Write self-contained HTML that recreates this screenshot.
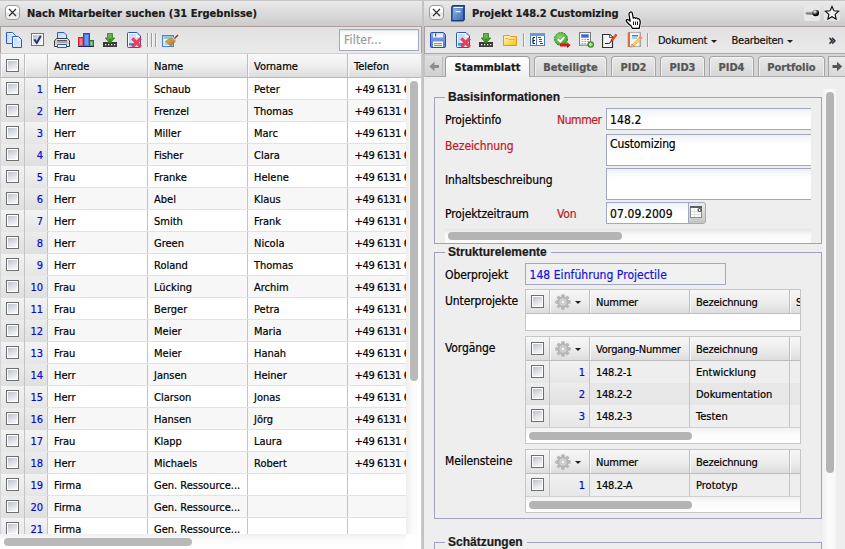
<!DOCTYPE html>
<html lang="de"><head><meta charset="utf-8"><title>Projectile</title>
<style>
html,body{margin:0;padding:0}
body{-webkit-text-stroke:0.2px;width:845px;height:549px;overflow:hidden;background:#eee;position:relative;font-family:"DejaVu Sans Condensed","Liberation Sans",sans-serif;font-size:11px;color:#000}
i,em,b{font-style:normal;font-weight:normal}
span,i,em,b,div{box-sizing:border-box}
#L{position:absolute;left:0;top:0;width:422px;height:549px;overflow:hidden;background:#fff}
#L:after{content:'';position:absolute;left:421px;top:54px;width:1px;height:495px;background:#cdcdcd}
#R{position:absolute;left:424px;top:0;width:421px;height:549px;overflow:hidden;background:#eee}
#split{position:absolute;left:422px;top:0;width:2px;height:549px;background:linear-gradient(90deg,#c9c9c9,#bebebe)}
.tbar{position:absolute;left:0;top:0;width:100%;height:26px;border-top:1px solid #c5c5c5;background:linear-gradient(#eaeaea,#d9d9d9 55%,#cbcbcb)}
.xbtn{position:absolute;top:4px;width:15px;height:15px;border:1px solid #9a9a9a;border-radius:4px;background:linear-gradient(#fff,#fff 45%,#e6e6e6 55%,#f4f4f4)}
.xbtn svg{position:absolute;left:0;top:0}
.ttl{position:absolute;top:5px;letter-spacing:0.04px;font-weight:bold;font-size:11px;line-height:15px;white-space:nowrap;color:#1a1a1a}
.tool{position:absolute;left:0;top:26px;width:100%;height:28px;background:linear-gradient(#e1e1e1,#eaeaea);border:1px solid #ad9e9e;border-bottom-color:#c2c2c2}
.ic{position:absolute;width:16px;height:16px;display:block}
.ic svg{display:block}
.sep3{position:absolute;top:6px;width:2px;height:14px;border-left:1px solid #a39d8c;background:#f6f6f6}
.sep1{position:absolute;top:6px;width:2px;height:14px;border-left:1px solid #a39d8c;background:#f6f6f6}
.filter{position:absolute;left:338px;top:2px;width:80px;letter-spacing:0.2px;height:22px;border:1px solid #a3a7c4;background:linear-gradient(#f2f4f5,#fff 40%);color:#9a9a9a;font-size:12px;line-height:20px;padding-left:4px;box-shadow:inset 0 1px 1px #dfe3e8}
/* grid head */
.ghead{position:absolute;left:0;top:53px;width:422px;height:25px;border-top:1px solid #d0d0d0;border-bottom:1px solid #b8b8b8;background:linear-gradient(#f9f9f9,#ededed 55%,#dddddd)}
.hc{position:absolute;top:0;height:100%;border-left:1px solid #bdbdbd;box-shadow:inset 1px 0 0 #fafafa;white-space:nowrap;overflow:hidden}
.hc b{position:absolute;left:6px;top:6px;line-height:14px;font-size:11px}
.cb{position:absolute;width:13px;height:13px;border:1px solid #6e6e6e;box-shadow:inset 0 0 0 1px #fff;background:linear-gradient(155deg,#b6bbc4,#dde0e5 50%,#fff)}
#lbody{position:absolute;left:0;top:78px;width:406px;height:456px;overflow:hidden;background:#fff}
.r{position:relative;height:22px;border-bottom:1px solid #e2e2e2;white-space:nowrap;background:#fff}
.r.alt{background:#f7f7f7}
.r span{position:absolute;top:0;height:21px;line-height:21px;padding-top:1px;overflow:hidden}
.r .c0{left:0;width:24px;height:22px;background:linear-gradient(#f3f3f3,#e5e5e5);border-left:1px solid #d4d4d4}
.r .c1{left:24px;width:23px;height:22px;background:linear-gradient(#f3f3f3,#e5e5e5);border-left:1px solid #c4c4c4;color:#0808d4;text-align:right;padding-right:4px}
.r.alt .c0,.r.alt .c1{background:linear-gradient(#ececec,#dfdfdf)}
.r .c2{left:47px;width:100px;border-left:1px solid #c4c4c4;padding-left:6px}
.r .c3{left:147px;width:100px;border-left:1px solid #c4c4c4;padding-left:6px}
.r .c4{left:247px;width:100px;border-left:1px solid #c4c4c4;padding-left:6px}
.r .c5{left:347px;width:75px;border-left:1px solid #c4c4c4;padding-left:6.5px;letter-spacing:-0.35px}
.r .cb{left:5px;top:4px}
.vsb{position:absolute}
#lvsb{left:406px;top:78px;width:15px;height:456px;background:linear-gradient(90deg,#ededed,#fbfbfb 40%,#fff)}
#lvsb i{position:absolute;left:4px;top:3px;width:8px;height:300px;border-radius:4px;background:#b9b9b9}
#lhsb{position:absolute;left:0;top:534px;width:406px;height:15px;background:linear-gradient(#f0f0f0,#fbfbfb 40%,#fff)}
.tool#rtool{border-bottom-color:#b3a4a4;width:430px}
#lhsb i{position:absolute;left:4px;top:4px;width:188px;height:8px;border-radius:4px;background:#b9b9b9}
/* right */
.pin{position:absolute;left:380px;top:4px;width:16px;height:16px;border-radius:2px;background:#e7e7e7}
.star{position:absolute;left:400px;top:4px;width:16px;height:16px;border-radius:2px;background:#e7e7e7}
.pin svg,.star svg{display:block}
.mnu{position:absolute;top:7px;font-size:11px;line-height:14px;white-space:nowrap;color:#111;letter-spacing:-0.25px}
.dn{position:absolute;width:0;height:0;border:3px solid transparent;border-top:3px solid #222;border-bottom:0}
.mnu .dn{left:100%;top:6px;margin-left:3.5px}
.more{position:absolute;left:403.500px;top:4.500px;font-size:14px;-webkit-text-stroke:0.5px;line-height:16px;color:#1a1a1a}
#tabs{position:absolute;left:0;top:54px;width:421px;height:23px;background:#d6d6d6;border-left:1px solid #c4c4c4}
#tabs:after{content:'';position:absolute;left:0;top:22px;width:100%;height:1px;background:#ababab}
.tab{position:absolute;top:2px;height:20px;border:1px solid #a4a4a4;border-bottom:0;border-radius:4px 4px 0 0;background:linear-gradient(#e9e9e9,#d6d6d6);color:#555;font-weight:bold;font-size:11px;text-align:center;line-height:21px;box-shadow:inset 0 1px 0 #f6f6f6,inset 1px 0 0 #f0f0f0,inset -1px 0 0 #f0f0f0}
.tab.act{background:linear-gradient(#fff,#f8f8f8 50%,#f0f0f0);color:#1a1a1a;height:21px;border-color:#9c9c9c;z-index:2;box-shadow:none}
.sarrow{position:absolute;top:2px;width:18px;height:20px;background:linear-gradient(#dedede,#d0d0d0);border:1px solid #e2e2e2;border-right-color:#bcbcbc;border-left:0;border-bottom:0}
.sarrow.r{border-left:1px solid #a4a4a4;border-top-color:#a4a4a4;border-right:0;width:18px;background:linear-gradient(#ececec,#d8d8d8)}
.sarrow svg{display:block}
#cont{position:absolute;left:-424px;top:78px;width:845px;height:471px;overflow:hidden}
#cont>*{margin-top:-78px}
.fs{position:absolute;left:434px;width:388px;border:1px solid #9fa1bd}
.lg{position:absolute;left:10px;top:-9px;padding:0 4px 0 3px;background:#eee;font-family:"Liberation Sans",sans-serif;font-weight:bold;font-size:12px;line-height:16px;color:#1a1a1a;white-space:nowrap}
.lb{position:absolute;left:445px;font-size:12px;line-height:14px;white-space:nowrap;letter-spacing:-0.1px}
.red{color:#c0181c}
.inp{position:absolute;border:1px solid #a3a7c4;background:linear-gradient(#eef1f3,#fff 9px);overflow:hidden}
.inp em{position:absolute;left:3px;top:4px;font-size:12px;line-height:14px;white-space:nowrap;letter-spacing:0.1px}
.calb{position:absolute;left:688px;top:202px;width:18px;height:22px;border:1px solid #a3a7c4;border-radius:0 3px 3px 0;background:linear-gradient(#ececec,#c4c4c4)}
.calb svg{display:block}
.hs2{position:absolute;height:14px;background:linear-gradient(#e6e6e6,#f8f8f8 40%,#fdfdfd);}
.hs2 i{position:absolute;top:3px;height:8px;border-radius:4px;background:#b4b4b4}
.clip{position:absolute;background:#eee}
.ro{position:absolute;border:1px solid #a3a7c4;background:#f0f0f0;color:#1414d8;font-size:12px;line-height:19px;padding:2px 0 0 3.5px;white-space:nowrap;letter-spacing:0.05px;overflow:hidden}
.sg{position:absolute;left:525px;width:276px;overflow:hidden;border:1px solid #c6c6c6;background:#fff}
.sgh{position:relative;height:24px;border-bottom:1px solid #bcbcbc;background:linear-gradient(#f7f7f7,#ececec 55%,#dddddd)}
.sgh .hc:first-child{border-left:0;box-shadow:none}
.sgh .hc b{top:6px;left:6px;letter-spacing:-0.2px}
.sgh svg{position:absolute;left:5px;top:4px}
.sr{position:relative;height:22px;background:#eeeeee;white-space:nowrap}
.sr.alt{background:#e7e7e7}
.sr span{position:absolute;top:0;height:22px;line-height:22px;padding-top:1px;overflow:hidden;border-left:1px solid #c4c4c4}
.sr .c0{left:0;width:23px;border-left:0;background:linear-gradient(rgba(255,255,255,.25),rgba(0,0,0,.03))}
.sr .c1{left:23px;width:40px;background:linear-gradient(rgba(255,255,255,.25),rgba(0,0,0,.03));color:#0808d4;text-align:right;padding-right:4px}
.sr .c2{left:63px;width:100px;padding-left:6px;letter-spacing:-0.3px}
.sr .c3{left:163px;width:100px;padding-left:6px}
.sr .c4{left:263px;width:20px}
.sr .cb{left:5px;top:4px}
.empty{height:16px;background:#fff}
.hs3{position:relative;height:16px;border-top:1px solid #cfcfcf;background:linear-gradient(#f1f1f1,#fbfbfb 40%,#fff)}
.hs3 i{position:absolute;left:3px;top:4px;width:163px;height:8px;border-radius:4px;background:#b4b4b4}
#rvsb{left:823px;top:89px;width:13px;height:460px;background:linear-gradient(90deg,#f2f2f2,#fbfbfb 50%,#f6f6f6)}
#rvsb i{position:absolute;left:3px;top:3px;width:8px;height:381px;border-radius:4px;background:#b4b4b4}
#cursor{position:absolute;left:200.5px;top:11px;width:20px;height:24px}

</style></head><body>
<div id="L">
<div class="tbar"><span class="xbtn" style="left:5px"><svg width="13" height="13" viewBox="0 0 13 13"><path d="M3 3L10 10M10 3L3 10" stroke="#2e2e2e" stroke-width="1.15" fill="none"/></svg></span><span class="ttl" style="left:27px">Nach Mitarbeiter suchen (31 Ergebnisse)</span></div>
<div class="tool" id="ltool"><span class="ic" style="left:5px;top:5px"><svg width="16" height="16" viewBox="0 0 16 16"><defs><linearGradient id="gpg" x1="0" y1="0" x2="1" y2="1"><stop offset="0" stop-color="#bcd4f8"/><stop offset="1" stop-color="#e6f0ff"/></linearGradient></defs><path d="M0.5 0.5H6.5L9.5 3.5V11.5H0.5Z" fill="url(#gpg)" stroke="#2f58c0"/><path d="M1.5 1.5H6V4H8.5" fill="none" stroke="#fff" stroke-width="1"/><path d="M6.500 4.500H12.500L15.500 7.500V15.500H6.500Z" fill="url(#gpg)" stroke="#2f58c0"/><path d="M7.500 14.500V5.500H12V8H14.500" fill="none" stroke="#fff" stroke-width="1"/></svg></span><span class="ic" style="left:30px;top:6px"><svg width="16" height="16" viewBox="0 0 16 16"><defs><linearGradient id="gck" x1="0" y1="0" x2="1" y2="1"><stop offset="0" stop-color="#b8bcc8"/><stop offset="1" stop-color="#fff"/></linearGradient></defs><rect x="0.5" y="0.500" width="12" height="12" fill="#fff" stroke="#747474"/><rect x="2" y="2" width="9" height="9" fill="url(#gck)"/><path d="M3.300 6.300L5.800 9.800L9.800 2.800" fill="none" stroke="#26367e" stroke-width="2"/></svg></span><span class="ic" style="left:53px;top:5px"><svg width="16" height="16" viewBox="0 0 16 16"><defs><linearGradient id="gpr" x1="0" y1="0" x2="0" y2="1"><stop offset="0" stop-color="#f4f4f4"/><stop offset="0.5" stop-color="#c8c8c8"/><stop offset="1" stop-color="#f0f0f0"/></linearGradient></defs><path d="M3.500 7V0.500H10L12.500 3V7Z" fill="url(#gpg)" stroke="#2a62b8"/><path d="M2.500 6.500H13.500L15.500 9V14.500H0.500V9Z" fill="url(#gpr)" stroke="#3a3a3a"/><rect x="3" y="8" width="10" height="3" fill="#a8a8a8"/><rect x="3" y="8" width="10" height="1" fill="#555"/><path d="M3.500 12.500H12.500V15.500H3.500Z" fill="#e8f0fc" stroke="#2a62b8"/></svg></span><span class="ic" style="left:77px;top:5px"><svg width="16" height="16" viewBox="0 0 16 16"><rect x="0.500" y="5.500" width="5" height="9" fill="#f05058" stroke="#d82030"/><rect x="2" y="7" width="2" height="6" fill="#f88088"/><rect x="5.500" y="1.500" width="6" height="13" fill="#4878e0" stroke="#2048c8"/><rect x="7" y="3" width="3" height="10" fill="#7098e8"/><rect x="11.500" y="8.500" width="4" height="6" fill="#58a858" stroke="#207820"/><rect x="12.700" y="10" width="1.600" height="3" fill="#98d098"/><rect x="0" y="14" width="16" height="1" fill="#28285a"/></svg></span><span class="ic" style="left:101px;top:5px"><svg width="16" height="16" viewBox="0 0 16 16"><defs><linearGradient id="gdn" x1="0" y1="0" x2="1" y2="0"><stop offset="0" stop-color="#3a8a20"/><stop offset="0.5" stop-color="#78b860"/><stop offset="1" stop-color="#2c7a18"/></linearGradient></defs><path d="M5.500 1.500H10.500V6H12.800L8 11.200L3.200 6H5.500Z" fill="url(#gdn)" stroke="#2e8218" stroke-width="0.800"/><rect x="1" y="10" width="14" height="5" fill="#383838"/><path d="M8 6.500V11" stroke="#3a8a20" stroke-width="3"/><g fill="#fff"><rect x="3" y="12" width="1.300" height="1.300"/><rect x="6" y="12" width="1.300" height="1.300"/><rect x="9" y="12" width="1.300" height="1.300"/><rect x="12" y="12" width="1.300" height="1.300"/></g></svg></span><span class="ic" style="left:125px;top:5px"><svg width="16" height="16" viewBox="0 0 16 16"><path d="M1.500 1.500Q1.500 0.500 2.500 0.500H11L14.500 4V14.500Q14.500 15.500 13.500 15.500H2.500Q1.500 15.500 1.500 14.500Z" fill="url(#gpg)" stroke="#2a58b8"/><path d="M2.500 14.500V1.500H10.500V4.500H13.500" fill="none" stroke="#fff"/><rect x="3" y="11" width="6" height="2.500" fill="#3898e8"/><path d="M6.300 6.300L14.800 14.800M14.800 6.300L6.300 14.800" stroke="#f03048" stroke-width="3.200" fill="none" stroke-opacity="0.920"/></svg></span><span class="ic" style="left:161px;top:5px"><svg width="17" height="16" viewBox="0 0 17 16"><defs><linearGradient id="gbr" x1="0" y1="0" x2="1" y2="1"><stop offset="0" stop-color="#e0b860"/><stop offset="1" stop-color="#a87020"/></linearGradient></defs><rect x="0.500" y="3.500" width="11" height="11" fill="#dce8fa" stroke="#4c80d8"/><rect x="1" y="4" width="10" height="1.200" fill="#9cc0f0"/><rect x="2" y="5.500" width="8" height="1" fill="#50b850"/><rect x="2" y="7.500" width="8" height="6" fill="#fff"/><rect x="2.500" y="9" width="7" height="4" fill="#b4ccf4"/><path d="M16 3L11.500 7.500" stroke="#8a3c14" stroke-width="1.400"/><path d="M10 5.500L13.500 9L9 14.500L3.500 9Z" fill="url(#gbr)" stroke="#9a6a20" stroke-width="0.500"/><path d="M10.300 5.300L13.800 8.800" stroke="#c8c8d8" stroke-width="1.300"/></svg></span><i class="sep3" style="left:146px"></i><i class="sep3" style="left:150px"></i><i class="sep3" style="left:154px"></i><span class="filter">Filter...</span></div>
<div class="ghead" id="lhead"><span class="hc" style="left:0;width:24px"><i class="cb" style="left:5px;top:5px"></i></span><span class="hc" style="left:24px;width:23px"></span><span class="hc" style="left:47px;width:100px"><b>Anrede</b></span><span class="hc" style="left:147px;width:100px"><b>Name</b></span><span class="hc" style="left:247px;width:100px"><b>Vorname</b></span><span class="hc" style="left:347px;width:75px"><b>Telefon</b></span></div>
<div id="lbody">
<div class="r"><span class="c0"><i class="cb"></i></span><span class="c1">1</span><span class="c2">Herr</span><span class="c3">Schaub</span><span class="c4">Peter</span><span class="c5">+49 6131 6</span></div>
<div class="r alt"><span class="c0"><i class="cb"></i></span><span class="c1">2</span><span class="c2">Herr</span><span class="c3">Frenzel</span><span class="c4">Thomas</span><span class="c5">+49 6131 6</span></div>
<div class="r"><span class="c0"><i class="cb"></i></span><span class="c1">3</span><span class="c2">Herr</span><span class="c3">Miller</span><span class="c4">Marc</span><span class="c5">+49 6131 6</span></div>
<div class="r alt"><span class="c0"><i class="cb"></i></span><span class="c1">4</span><span class="c2">Frau</span><span class="c3">Fisher</span><span class="c4">Clara</span><span class="c5">+49 6131 6</span></div>
<div class="r"><span class="c0"><i class="cb"></i></span><span class="c1">5</span><span class="c2">Frau</span><span class="c3">Franke</span><span class="c4">Helene</span><span class="c5">+49 6131 6</span></div>
<div class="r alt"><span class="c0"><i class="cb"></i></span><span class="c1">6</span><span class="c2">Herr</span><span class="c3">Abel</span><span class="c4">Klaus</span><span class="c5">+49 6131 6</span></div>
<div class="r"><span class="c0"><i class="cb"></i></span><span class="c1">7</span><span class="c2">Herr</span><span class="c3">Smith</span><span class="c4">Frank</span><span class="c5">+49 6131 6</span></div>
<div class="r alt"><span class="c0"><i class="cb"></i></span><span class="c1">8</span><span class="c2">Herr</span><span class="c3">Green</span><span class="c4">Nicola</span><span class="c5">+49 6131 6</span></div>
<div class="r"><span class="c0"><i class="cb"></i></span><span class="c1">9</span><span class="c2">Herr</span><span class="c3">Roland</span><span class="c4">Thomas</span><span class="c5">+49 6131 6</span></div>
<div class="r alt"><span class="c0"><i class="cb"></i></span><span class="c1">10</span><span class="c2">Frau</span><span class="c3">Lücking</span><span class="c4">Archim</span><span class="c5">+49 6131 6</span></div>
<div class="r"><span class="c0"><i class="cb"></i></span><span class="c1">11</span><span class="c2">Frau</span><span class="c3">Berger</span><span class="c4">Petra</span><span class="c5">+49 6131 6</span></div>
<div class="r alt"><span class="c0"><i class="cb"></i></span><span class="c1">12</span><span class="c2">Frau</span><span class="c3">Meier</span><span class="c4">Maria</span><span class="c5">+49 6131 6</span></div>
<div class="r"><span class="c0"><i class="cb"></i></span><span class="c1">13</span><span class="c2">Frau</span><span class="c3">Meier</span><span class="c4">Hanah</span><span class="c5">+49 6131 6</span></div>
<div class="r alt"><span class="c0"><i class="cb"></i></span><span class="c1">14</span><span class="c2">Herr</span><span class="c3">Jansen</span><span class="c4">Heiner</span><span class="c5">+49 6131 6</span></div>
<div class="r"><span class="c0"><i class="cb"></i></span><span class="c1">15</span><span class="c2">Herr</span><span class="c3">Clarson</span><span class="c4">Jonas</span><span class="c5">+49 6131 6</span></div>
<div class="r alt"><span class="c0"><i class="cb"></i></span><span class="c1">16</span><span class="c2">Herr</span><span class="c3">Hansen</span><span class="c4">Jörg</span><span class="c5">+49 6131 6</span></div>
<div class="r"><span class="c0"><i class="cb"></i></span><span class="c1">17</span><span class="c2">Frau</span><span class="c3">Klapp</span><span class="c4">Laura</span><span class="c5">+49 6131 6</span></div>
<div class="r alt"><span class="c0"><i class="cb"></i></span><span class="c1">18</span><span class="c2">Herr</span><span class="c3">Michaels</span><span class="c4">Robert</span><span class="c5">+49 6131 6</span></div>
<div class="r"><span class="c0"><i class="cb"></i></span><span class="c1">19</span><span class="c2">Firma</span><span class="c3">Gen. Ressource...</span><span class="c4"></span><span class="c5"></span></div>
<div class="r alt"><span class="c0"><i class="cb"></i></span><span class="c1">20</span><span class="c2">Firma</span><span class="c3">Gen. Ressource...</span><span class="c4"></span><span class="c5"></span></div>
<div class="r"><span class="c0"><i class="cb"></i></span><span class="c1">21</span><span class="c2">Firma</span><span class="c3">Gen. Ressource...</span><span class="c4"></span><span class="c5"></span></div>
</div>
<div class="vsb" id="lvsb"><i></i></div><div class="hsb" id="lhsb"><i></i></div>
</div>
<div id="split"></div>
<div id="R">
<div class="tbar"><span class="xbtn" style="left:5px"><svg width="13" height="13" viewBox="0 0 13 13"><path d="M3 3L10 10M10 3L3 10" stroke="#2e2e2e" stroke-width="1.15" fill="none"/></svg></span><span class="ic" style="left:27px;top:4px"><svg width="16" height="17" viewBox="0 0 16 17"><defs><linearGradient id="gbk" x1="0" y1="0" x2="1" y2="1"><stop offset="0" stop-color="#8ab4e4"/><stop offset="1" stop-color="#3c6cb4"/></linearGradient></defs><path d="M2 0.800H13.200V14.500L12 15.800H0.800V2Z" fill="#5888c8" stroke="#1c3c7c" stroke-width="1.400"/><rect x="2" y="3.500" width="9.500" height="11.500" fill="url(#gbk)"/><path d="M2.500 2.500H12" stroke="#fff" stroke-width="1"/><rect x="4.500" y="6" width="5" height="1.200" fill="#e8f0fc"/><path d="M12.300 2.500V15" stroke="#1c3c7c" stroke-width="0.800"/></svg></span><span class="ttl" style="left:48px;letter-spacing:-0.03px">Projekt 148.2 Customizing</span><span class="pin"><svg width="16" height="16" viewBox="0 0 16 16"><defs><radialGradient id="gpn" cx="0.380" cy="0.300" r="0.600"><stop offset="0" stop-color="#fff"/><stop offset="0.300" stop-color="#aaa"/><stop offset="0.800" stop-color="#111"/><stop offset="1" stop-color="#000"/></radialGradient><linearGradient id="gnd" x1="0" y1="0" x2="0" y2="1"><stop offset="0" stop-color="#d8d8d8"/><stop offset="1" stop-color="#555"/></linearGradient></defs><path d="M1 8L3 6.300H9V9.500H3Z" fill="url(#gnd)"/><circle cx="11.700" cy="8" r="3.300" fill="url(#gpn)"/></svg></span><span class="star"><svg width="16" height="16" viewBox="0 0 16 16"><path d="M8.00 1.40L9.94 5.73L14.66 6.24L11.14 9.42L12.11 14.06L8.00 11.70L3.89 14.06L4.86 9.42L1.34 6.24L6.06 5.73Z" fill="#f4f4f4" stroke="#111" stroke-width="1.150" stroke-linejoin="miter"/></svg></span></div>
<div class="tool" id="rtool"><span class="ic" style="left:5px;top:5px"><svg width="16" height="16" viewBox="0 0 16 16"><defs><linearGradient id="gsv" x1="0" y1="0" x2="0" y2="1"><stop offset="0" stop-color="#88a8e8"/><stop offset="1" stop-color="#5078d0"/></linearGradient></defs><path d="M1.500 0.500H13.500L15.500 2.500V14.500Q15.500 15.500 14.500 15.500H1.500Q0.500 15.500 0.500 14.500V1.500Q0.500 0.500 1.500 0.500Z" fill="url(#gsv)" stroke="#2850a8"/><rect x="3" y="1" width="10" height="4.500" fill="#f0f4fc"/><rect x="3" y="1" width="10" height="1.500" fill="#d0dcf4"/><rect x="5" y="1.500" width="1.200" height="3" fill="#304890"/><rect x="3" y="9.500" width="10" height="5.500" fill="#fff"/><rect x="4" y="11" width="8" height="1.200" fill="#68b040"/><rect x="4" y="13" width="8" height="1.200" fill="#68b040"/></svg></span><span class="ic" style="left:30px;top:5px"><svg width="16" height="16" viewBox="0 0 16 16"><path d="M1.500 1.500Q1.500 0.500 2.500 0.500H11L14.500 4V14.500Q14.500 15.500 13.500 15.500H2.500Q1.500 15.500 1.500 14.500Z" fill="url(#gpg)" stroke="#2a58b8"/><path d="M2.500 14.500V1.500H10.500V4.500H13.500" fill="none" stroke="#fff"/><rect x="3" y="11" width="6" height="2.500" fill="#3898e8"/><path d="M6.300 6.300L14.800 14.800M14.800 6.300L6.300 14.800" stroke="#f03048" stroke-width="3.200" fill="none" stroke-opacity="0.920"/></svg></span><span class="ic" style="left:53px;top:5px"><svg width="16" height="16" viewBox="0 0 16 16"><defs><linearGradient id="gdn" x1="0" y1="0" x2="1" y2="0"><stop offset="0" stop-color="#3a8a20"/><stop offset="0.5" stop-color="#78b860"/><stop offset="1" stop-color="#2c7a18"/></linearGradient></defs><path d="M5.500 1.500H10.500V6H12.800L8 11.200L3.200 6H5.500Z" fill="url(#gdn)" stroke="#2e8218" stroke-width="0.800"/><rect x="1" y="10" width="14" height="5" fill="#383838"/><path d="M8 6.500V11" stroke="#3a8a20" stroke-width="3"/><g fill="#fff"><rect x="3" y="12" width="1.300" height="1.300"/><rect x="6" y="12" width="1.300" height="1.300"/><rect x="9" y="12" width="1.300" height="1.300"/><rect x="12" y="12" width="1.300" height="1.300"/></g></svg></span><span class="ic" style="left:77px;top:5px"><svg width="16" height="16" viewBox="0 0 16 16"><defs><linearGradient id="gfo" x1="0" y1="0" x2="1" y2="1"><stop offset="0" stop-color="#fff8c8"/><stop offset="1" stop-color="#f0c418"/></linearGradient></defs><path d="M1.500 3.500H7.500L8.500 4.500H14.500V13.500H1.500Z" fill="url(#gfo)" stroke="#e09828"/><path d="M3 6.500H6L7 7.500H13" fill="none" stroke="#e8b040" stroke-width="1"/></svg></span><span class="ic" style="left:105px;top:5px"><svg width="16" height="16" viewBox="0 0 16 16"><rect x="0.500" y="1.500" width="14" height="12" fill="#fff" stroke="#4c7cc8"/><rect x="0" y="1" width="15" height="3" fill="#6c98d8"/><rect x="6" y="4" width="1" height="9" fill="#4c7cc8"/><path d="M3 5.500V11.500M3 5.500H5M3 8.500H5M3 11.500H5" stroke="#181818" stroke-width="1.200" fill="none"/><path d="M8 5.500H11M9 7.500H12M9 9.500H12M10 11.500H13" stroke="#2038e8" stroke-width="1.200"/></svg></span><span class="ic" style="left:129px;top:5px"><svg width="17" height="16" viewBox="0 0 17 16"><defs><radialGradient id="ggo" cx="0.400" cy="0.350" r="0.700"><stop offset="0" stop-color="#90d078"/><stop offset="1" stop-color="#38a020"/></radialGradient></defs><circle cx="7" cy="7" r="6.500" fill="url(#ggo)" stroke="#2e9a1c" stroke-dasharray="2.200 0.800"/><path d="M3.800 7.200L6.300 9.600L10.500 4.800" fill="none" stroke="#fff" stroke-width="2"/><path d="M6 11.500H13V10.300L16.500 13L13 15.700V14.500H6Z" fill="#e81018"/><path d="M13 14.500V15.700L16.500 13Z" fill="#700"/></svg></span><span class="ic" style="left:154px;top:5px"><svg width="16" height="16" viewBox="0 0 16 16"><rect x="0.500" y="0.500" width="11" height="13" fill="#f8f8f8" stroke="#7c7c7c"/><rect x="1" y="12" width="10" height="1.500" fill="#c8c8c8"/><rect x="2.500" y="2.500" width="7" height="3" fill="#3c68c8" stroke="#6088d8" stroke-width="0.600"/><g fill="#a8a8a8"><rect x="2.500" y="7" width="1.800" height="1"/><rect x="5.300" y="7" width="1.800" height="1"/><rect x="2.500" y="9" width="1.800" height="1"/><rect x="5.300" y="9" width="1.800" height="1"/><rect x="8.100" y="9" width="1.800" height="1"/><rect x="2.500" y="11" width="1.800" height="1"/><rect x="5.300" y="11" width="1.800" height="1"/></g><rect x="8.100" y="7" width="1.800" height="1" fill="#e83038"/><circle cx="11.700" cy="12.500" r="3.300" fill="#3c8c20"/><path d="M11.700 10.600V14.400M10.500 11.400V13.600M12.900 11.400V13.600" stroke="#e8ffe0" stroke-width="1"/></svg></span><span class="ic" style="left:177px;top:5px"><svg width="16" height="16" viewBox="0 0 16 16"><path d="M0.500 2.500H8L10.500 5V15.500H0.500Z" fill="#f4f4f4" stroke="#303030" stroke-width="1.200"/><path d="M7.500 2.500V5.500H10.500" fill="#fff" stroke="#303030" stroke-width="0.800"/><path d="M3 11.500H6.500Q8.500 11.500 8.500 9.500" fill="none" stroke="#202020" stroke-width="1"/><path d="M14.500 2.500L9.200 9" stroke="#e82818" stroke-width="2.200"/><path d="M14.200 2.800L9.500 8.600" stroke="#f8a020" stroke-width="0.800" stroke-dasharray="1 0.600"/><path d="M9.500 8L8.200 10.300L10.500 9Z" fill="#303030"/></svg></span><span class="ic" style="left:202px;top:5px"><svg width="16" height="16" viewBox="0 0 16 16"><rect x="2.500" y="0.500" width="11" height="14" fill="#f4f4f4" stroke="#b0b0b0"/><rect x="12.500" y="1" width="1.500" height="14" fill="#a0a0a0"/><rect x="0.800" y="0.500" width="2.200" height="14.500" fill="#c84818"/><path d="M0.500 2H3M0.500 4H3M0.500 6H3M0.500 8H3M0.500 10H3M0.500 12H3M0.500 14H3" stroke="#f0c090" stroke-width="0.700"/><rect x="5" y="3" width="6" height="1.500" fill="#4880e0"/><rect x="5" y="5.500" width="5" height="1.200" fill="#88b0f0"/><path d="M13.500 6L6 13.500" stroke="#f0c030" stroke-width="3"/><path d="M13.500 6L6 13.500" stroke="#fff0a0" stroke-width="0.800"/><path d="M14.600 4.800L12.500 7" stroke="#e89090" stroke-width="3"/><path d="M5 12L3.800 15.200L7.200 14.300Z" fill="#e8c8a0" stroke="#a07030" stroke-width="0.500"/></svg></span><i class="sep1" style="left:98px"></i><i class="sep1" style="left:222px"></i><span class="mnu" style="left:233px">Dokument<i class="dn"></i></span><span class="mnu" style="left:306.5px">Bearbeiten<i class="dn"></i></span><span class="more">»</span></div>
<div id="tabs"><span class="sarrow" style="left:0"><svg width="18" height="20" viewBox="0 0 18 20"><path d="M4.300 9.500L9.500 4.800V8H14V11H9.500V14.200Z" fill="#8c8c8c"/></svg></span><span class="tab act" style="left:20px;width:85px">Stammblatt</span><span class="tab" style="left:109px;width:73px">Beteiligte</span><span class="tab" style="left:186px;width:45px">PID2</span><span class="tab" style="left:235px;width:45px">PID3</span><span class="tab" style="left:284px;width:45px">PID4</span><span class="tab" style="left:333px;width:67px">Portfolio</span><span class="sarrow r" style="left:403px"><svg width="17" height="20" viewBox="0 0 17 20"><path d="M13.200 9.500L8 4.800V8H3.500V11H8V14.200Z" fill="#555"/></svg></span></div>
<div id="cont">
<div class="fs" style="top:97px;height:147px"><span class="lg">Basisinformationen</span></div>
<span class="lb" style="top:113px">Projektinfo</span><span class="lb red" style="left:557px;top:113px;letter-spacing:-0.4px">Nummer</span><span class="inp" style="left:606px;top:108px;width:215px;height:22px"><em>148.2</em></span>
<span class="lb red" style="top:139px">Bezeichnung</span><span class="inp" style="left:606px;top:134px;width:215px;height:32px"><em style="top:2px;letter-spacing:-0.1px">Customizing</em></span>
<span class="lb" style="top:173px">Inhaltsbeschreibung</span><span class="inp" style="left:606px;top:168px;width:215px;height:32px"></span>
<span class="lb" style="top:207px">Projektzeitraum</span><span class="lb red" style="left:557px;top:207px">Von</span><span class="inp" style="left:606px;top:202px;width:83px;height:22px"><em>07.09.2009</em></span><span class="calb"><svg width="15" height="18" viewBox="0 0 15 18"><rect x="1.500" y="3.500" width="11" height="11" fill="#fff" stroke="#8a8a8a"/><rect x="1" y="3" width="12" height="2" fill="#606060"/><path d="M5.500 6V14M9 6V14M2 8.500H12M2 11.500H12" stroke="#d8d8d8" stroke-width="0.800"/><circle cx="10.600" cy="7" r="1.600" fill="#fff" stroke="#111" stroke-width="0.900"/></svg></span>
<span class="hs2" style="left:445px;top:229px;width:366px"><i style="left:3px;width:174px"></i></span>
<span class="clip" style="left:811px;top:100px;width:10px;height:142px"></span>
<div class="fs" style="top:252px;height:267px"><span class="lg">Strukturelemente</span></div>
<span class="lb" style="top:268px">Oberprojekt</span><span class="ro" style="left:525px;top:263px;width:201px;height:22px">148 Einführung Projectile</span>
<span class="lb" style="top:294px">Unterprojekte</span><div class="sg" style="top:289px;height:42px"><div class="sgh"><span class="hc" style="left:0;width:23px"><i class="cb" style="left:5px;top:5px"></i></span><span class="hc" style="left:23px;width:40px"><svg width="16" height="16" viewBox="0 0 17 17"><g transform="translate(8.500 8.500)"><g fill="#bababa" stroke="#a6a6a6" stroke-width="0.400"><rect x="-1.600" y="-8" width="3.200" height="16" rx="0.800"/><rect x="-1.600" y="-8" width="3.200" height="16" rx="0.800" transform="rotate(45)"/><rect x="-1.600" y="-8" width="3.200" height="16" rx="0.800" transform="rotate(90)"/><rect x="-1.600" y="-8" width="3.200" height="16" rx="0.800" transform="rotate(135)"/></g><circle r="5.600" fill="#bcbcbc" stroke="#a4a4a4" stroke-width="0.500"/><circle r="3.600" fill="#d4d4d4"/><circle r="2.100" fill="#f2f2f2" stroke="#a8a8a8" stroke-width="0.600"/></g></svg><i class="dn" style="left:24.5px;top:11px"></i></span><span class="hc" style="left:63px;width:100px"><b>Nummer</b></span><span class="hc" style="left:163px;width:100px"><b>Bezeichnung</b></span><span class="hc" style="left:263px;width:20px"><b>S</b></span></div><div class="empty"></div></div>
<span class="lb" style="top:341px">Vorgänge</span><div class="sg" style="top:336px;height:108px"><div class="sgh"><span class="hc" style="left:0;width:23px"><i class="cb" style="left:5px;top:5px"></i></span><span class="hc" style="left:23px;width:40px"><svg width="16" height="16" viewBox="0 0 17 17"><g transform="translate(8.500 8.500)"><g fill="#bababa" stroke="#a6a6a6" stroke-width="0.400"><rect x="-1.600" y="-8" width="3.200" height="16" rx="0.800"/><rect x="-1.600" y="-8" width="3.200" height="16" rx="0.800" transform="rotate(45)"/><rect x="-1.600" y="-8" width="3.200" height="16" rx="0.800" transform="rotate(90)"/><rect x="-1.600" y="-8" width="3.200" height="16" rx="0.800" transform="rotate(135)"/></g><circle r="5.600" fill="#bcbcbc" stroke="#a4a4a4" stroke-width="0.500"/><circle r="3.600" fill="#d4d4d4"/><circle r="2.100" fill="#f2f2f2" stroke="#a8a8a8" stroke-width="0.600"/></g></svg><i class="dn" style="left:24.5px;top:11px"></i></span><span class="hc" style="left:63px;width:100px"><b>Vorgang-Nummer</b></span><span class="hc" style="left:163px;width:100px"><b>Bezeichnung</b></span><span class="hc" style="left:263px;width:20px"><b></b></span></div><div class="sr"><span class="c0"><i class="cb"></i></span><span class="c1">1</span><span class="c2">148.2-1</span><span class="c3">Entwicklung</span><span class="c4"></span></div><div class="sr alt"><span class="c0"><i class="cb"></i></span><span class="c1">2</span><span class="c2">148.2-2</span><span class="c3">Dokumentation</span><span class="c4"></span></div><div class="sr"><span class="c0"><i class="cb"></i></span><span class="c1">3</span><span class="c2">148.2-3</span><span class="c3">Testen</span><span class="c4"></span></div><div class="hs3"><i></i></div></div>
<span class="lb" style="top:454px">Meilensteine</span><div class="sg" style="top:449px;height:64px"><div class="sgh"><span class="hc" style="left:0;width:23px"><i class="cb" style="left:5px;top:5px"></i></span><span class="hc" style="left:23px;width:40px"><svg width="16" height="16" viewBox="0 0 17 17"><g transform="translate(8.500 8.500)"><g fill="#bababa" stroke="#a6a6a6" stroke-width="0.400"><rect x="-1.600" y="-8" width="3.200" height="16" rx="0.800"/><rect x="-1.600" y="-8" width="3.200" height="16" rx="0.800" transform="rotate(45)"/><rect x="-1.600" y="-8" width="3.200" height="16" rx="0.800" transform="rotate(90)"/><rect x="-1.600" y="-8" width="3.200" height="16" rx="0.800" transform="rotate(135)"/></g><circle r="5.600" fill="#bcbcbc" stroke="#a4a4a4" stroke-width="0.500"/><circle r="3.600" fill="#d4d4d4"/><circle r="2.100" fill="#f2f2f2" stroke="#a8a8a8" stroke-width="0.600"/></g></svg><i class="dn" style="left:24.5px;top:11px"></i></span><span class="hc" style="left:63px;width:100px"><b>Nummer</b></span><span class="hc" style="left:163px;width:100px"><b>Bezeichnung</b></span><span class="hc" style="left:263px;width:20px"><b></b></span></div><div class="sr"><span class="c0"><i class="cb"></i></span><span class="c1">1</span><span class="c2">148.2-A</span><span class="c3">Prototyp</span><span class="c4"></span></div><div class="hs3"><i></i></div></div>
<div class="fs" style="top:542px;height:40px"><span class="lg">Schätzungen</span></div>
<div class="vsb" id="rvsb"><i></i></div>
</div>
<span id="cursor"><svg width="18" height="19" viewBox="0 0 18 19" style="overflow:visible"><path d="M5 1.200Q6.800 0.300 7.300 2.200L8.300 7.200Q9.300 6 10.500 7.300Q11.800 6.300 12.800 7.800Q14.500 7.300 15 9.500Q15.600 12 14.800 14L14.200 17.300H7.300L6 14.800Q4 13.500 1.500 10.500Q0.500 8.800 2.300 8.300Q3.800 8.500 5.200 10.200L4 3.500Q3.800 2 5 1.200Z" fill="none" stroke="#fff" stroke-opacity="0.8" stroke-width="2.800" stroke-linejoin="round"/><path d="M5 1.200Q6.800 0.300 7.300 2.200L8.300 7.200Q9.300 6 10.500 7.300Q11.800 6.300 12.800 7.800Q14.500 7.300 15 9.500Q15.600 12 14.800 14L14.200 17.300H7.300L6 14.800Q4 13.500 1.500 10.500Q0.500 8.800 2.300 8.300Q3.800 8.500 5.200 10.200L4 3.500Q3.800 2 5 1.200Z" fill="#fff" stroke="#000" stroke-width="1.250" stroke-linejoin="round"/><path d="M8.500 10.500V14M10.500 10.500V14M12.500 10.500V14" stroke="#000" stroke-width="0.900"/></svg></span>
</div>
</body></html>
